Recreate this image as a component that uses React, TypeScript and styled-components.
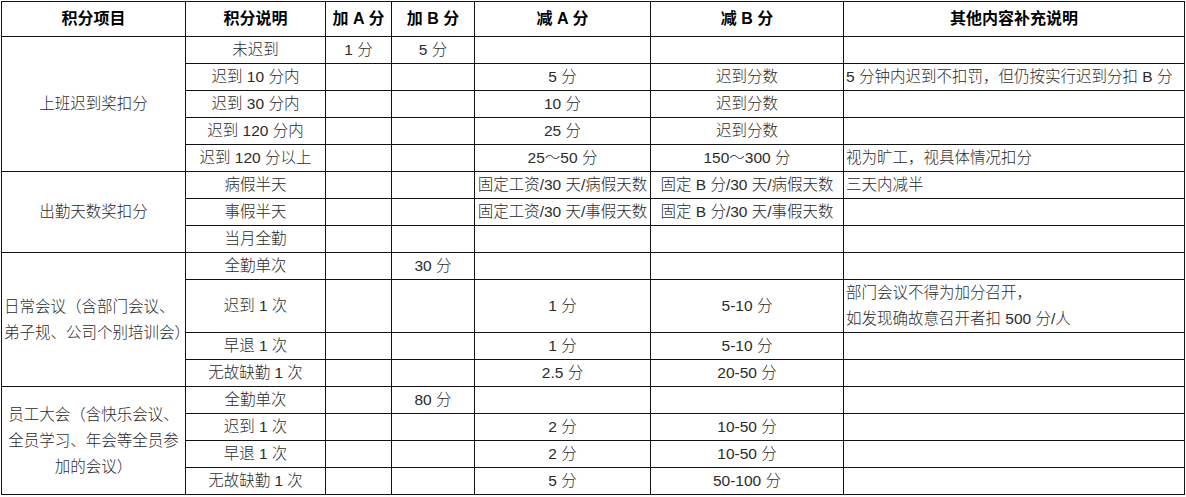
import React from 'react';
import styled, { createGlobalStyle } from 'styled-components';

type Row = {
  desc: string;
  addA?: string;
  addB?: string;
  subA?: string;
  subB?: string;
  note?: string[];
};

type Group = {
  title: string[];
  align?: 'left' | 'center';
  rows: Row[];
};

const headers = ['积分项目', '积分说明', '加 A 分', '加 B 分', '减 A 分', '减 B 分', '其他内容补充说明'];

const groups: Group[] = [
  {
    title: ['上班迟到奖扣分'],
    rows: [
      { desc: '未迟到', addA: '1 分', addB: '5 分' },
      { desc: '迟到 10 分内', subA: '5 分', subB: '迟到分数', note: ['5 分钟内迟到不扣罚，但仍按实行迟到分扣 B 分'] },
      { desc: '迟到 30 分内', subA: '10 分', subB: '迟到分数' },
      { desc: '迟到 120 分内', subA: '25 分', subB: '迟到分数' },
      { desc: '迟到 120 分以上', subA: '25～50 分', subB: '150～300 分', note: ['视为旷工，视具体情况扣分'] },
    ],
  },
  {
    title: ['出勤天数奖扣分'],
    rows: [
      { desc: '病假半天', subA: '固定工资/30 天/病假天数', subB: '固定 B 分/30 天/病假天数', note: ['三天内减半'] },
      { desc: '事假半天', subA: '固定工资/30 天/事假天数', subB: '固定 B 分/30 天/事假天数' },
      { desc: '当月全勤' },
    ],
  },
  {
    title: ['日常会议（含部门会议、', '弟子规、公司个别培训会）'],
    align: 'left',
    rows: [
      { desc: '全勤单次', addB: '30 分' },
      {
        desc: '迟到 1 次',
        subA: '1 分',
        subB: '5-10 分',
        note: ['部门会议不得为加分召开，', '如发现确故意召开者扣 500 分/人'],
      },
      { desc: '早退 1 次', subA: '1 分', subB: '5-10 分' },
      { desc: '无故缺勤 1 次', subA: '2.5 分', subB: '20-50 分' },
    ],
  },
  {
    title: ['员工大会（含快乐会议、', '全员学习、年会等全员参', '加的会议）'],
    rows: [
      { desc: '全勤单次', addB: '80 分' },
      { desc: '迟到 1 次', subA: '2 分', subB: '10-50 分' },
      { desc: '早退 1 次', subA: '2 分', subB: '10-50 分' },
      { desc: '无故缺勤 1 次', subA: '5 分', subB: '50-100 分' },
    ],
  },
];

const App: React.FC = () => {
  return (
    <>
      <GlobalStyle />
      <Sheet>
        {headers.map((h) => (
          <HeadCell key={h}>{h}</HeadCell>
        ))}
        {groups.map((group) => {
          const align = group.align ?? 'center';
          return (
            <React.Fragment key={group.title[0]}>
              <GroupCell $span={group.rows.length} $align={align}>
                <Lines $align={align}>
                  {group.title.map((line) => (
                    <Line key={line}>{line}</Line>
                  ))}
                </Lines>
              </GroupCell>
              {group.rows.map((row, i) => (
                <React.Fragment key={i}>
                  <Cell>{row.desc}</Cell>
                  <Cell>{row.addA}</Cell>
                  <Cell>{row.addB}</Cell>
                  <Cell>{row.subA}</Cell>
                  <Cell>{row.subB}</Cell>
                  <NoteCell>
                    {row.note && (
                      <Lines $align="left">
                        {row.note.map((line) => (
                          <Line key={line}>{line}</Line>
                        ))}
                      </Lines>
                    )}
                  </NoteCell>
                </React.Fragment>
              ))}
            </React.Fragment>
          );
        })}
      </Sheet>
    </>
  );
};

export default App;

const GlobalStyle = createGlobalStyle`
  html, body {
    margin: 0;
    padding: 0;
    background: #ffffff;
  }
  body {
    font-family: "Liberation Sans", "Noto Sans CJK SC", sans-serif;
  }
`;

const Sheet = styled.div`
  display: grid;
  grid-template-columns: 184px 140px 66px 83px 176px 193px 341px;
  grid-template-rows: 35px repeat(9, 27px) 53px repeat(6, 27px);
  width: max-content;
  margin: 1px 0 0 1px;
  border-top: 1px solid #111;
  border-left: 1px solid #111;
`;

const BaseCell = styled.div`
  box-sizing: border-box;
  display: flex;
  align-items: center;
  justify-content: center;
  border-right: 1px solid #111;
  border-bottom: 1px solid #111;
  white-space: nowrap;
  overflow: visible;
  font-size: 15.5px;
  line-height: 20px;
  color: #2b2b2b;
  font-weight: 300;
`;

const HeadCell = styled(BaseCell)`
  font-size: 16px;
  font-weight: 700;
  color: #000;
`;

const Cell = styled(BaseCell)``;

type GroupCellProps = {
  $span: number;
  $align: 'left' | 'center';
};
const GroupCell = styled(BaseCell)<GroupCellProps>`
  grid-column: 1;
  grid-row: span ${(props) => props.$span};
  justify-content: ${(props) => (props.$align === 'left' ? 'flex-start' : 'center')};
  padding-left: ${(props) => (props.$align === 'left' ? '2px' : '0')};
`;

const NoteCell = styled(BaseCell)`
  justify-content: flex-start;
  padding-left: 2px;
`;

type LinesProps = {
  $align: 'left' | 'center';
};
const Lines = styled.div<LinesProps>`
  display: flex;
  flex-direction: column;
  align-items: ${(props) => (props.$align === 'left' ? 'flex-start' : 'center')};
  line-height: 26px;
`;

const Line = styled.span`
  white-space: nowrap;
`;
